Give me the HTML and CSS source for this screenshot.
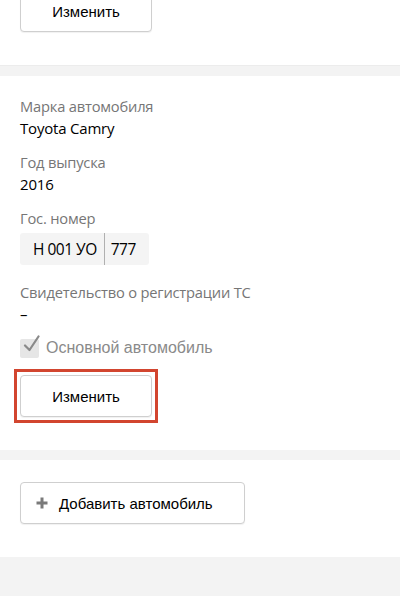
FILE: index.html
```html
<!DOCTYPE html>
<html lang="ru">
<head>
<meta charset="utf-8">
<link rel="stylesheet" href="styles.css">
</head>
<body>
<div class="page">
  <section class="section section-top">
    <button class="btn btn-edit btn-cut">Изменить</button>
  </section>
  <section class="section card">
    <div class="field">
      <div class="label">Марка автомобиля</div>
      <div class="value">Toyota Camry</div>
    </div>
    <div class="field">
      <div class="label">Год выпуска</div>
      <div class="value">2016</div>
    </div>
    <div class="field">
      <div class="label">Гос. номер</div>
      <div class="plate">
        <span class="plate-num">Н 001 УО</span>
        <span class="plate-reg">777</span>
      </div>
    </div>
    <div class="field field-cert">
      <div class="label">Свидетельство о регистрации ТС</div>
      <div class="value">–</div>
    </div>
    <label class="check">
      <span class="check-box">
        <svg width="20" height="20" viewBox="0 0 20 20"><path d="M4 10.5 L8.5 15 L17.5 1.5" fill="none" stroke="#8a8a8a" stroke-width="2.2" stroke-linecap="round" stroke-linejoin="round"/></svg>
      </span>
      <span class="check-text">Основной автомобиль</span>
    </label>
    <div class="marker">
      <button class="btn btn-edit">Изменить</button>
    </div>
  </section>
  <section class="section section-add">
    <button class="btn btn-add">
      <svg class="plus" width="12" height="12" viewBox="0 0 12 12"><path d="M6 0.5 V11.5 M0.5 6 H11.5" stroke="#7a7a7a" stroke-width="3"/></svg>
      <span>Добавить автомобиль</span>
    </button>
  </section>
</div>
</body>
</html>
```
FILE: styles.css
```css
* { box-sizing: border-box; }
html, body { margin: 0; padding: 0; }
body {
  background: #f3f3f3;
  font-family: "Liberation Sans", Arial, sans-serif;
  color: #000;
  width: 400px;
  height: 596px;
  overflow: hidden;
}
.page {
  display: flex;
  flex-direction: column;
  gap: 10px;
}
.section {
  background: #fff;
  padding: 0 20px;
}
.section-top {
  padding-bottom: 33px;
  border-bottom: 1px solid #ececec;
}
.btn {
  display: flex;
  align-items: center;
  justify-content: center;
  height: 42px;
  background: #fff;
  border: 1px solid #cfcfcf;
  border-radius: 4px;
  box-shadow: 0 1px 1px rgba(0,0,0,0.06);
  font-family: "Liberation Sans", Arial, sans-serif;
  font-size: 15px;
  color: #000;
  padding: 0;
}
.btn-edit { width: 132px; }
.btn-cut { margin-top: -10px; }
.card {
  padding-top: 19px;
  padding-bottom: 27px;
}
.field { margin-bottom: 12px; }
.label {
  font-family: "Open Sans", sans-serif;
  font-size: 14.7px;
  line-height: 22px;
  color: #767676;
  letter-spacing: -0.2px;
}
.value {
  font-family: "Open Sans", sans-serif;
  font-size: 15px;
  line-height: 22px;
  color: #000;
  letter-spacing: -0.2px;
}
.plate {
  margin-top: 4px;
  display: inline-flex;
  align-items: stretch;
  height: 32px;
  background: #f4f4f4;
  border-radius: 3px;
  font-family: "Open Sans", sans-serif;
  font-size: 15.5px;
  letter-spacing: -0.5px;
}
.plate-num {
  display: flex;
  align-items: center;
  padding: 0 7px 0 13px;
  border-right: 1px solid #b0b0b0;
}
.plate-reg {
  display: flex;
  align-items: center;
  padding: 0 13px 0 6px;
}
.field-cert { margin-top: 16px; margin-bottom: 13px; }
.check {
  display: flex;
  align-items: center;
  gap: 7px;
  height: 20px;
}
.check-box {
  width: 19px;
  height: 19px;
  background: #e6e6e6;
  border-radius: 2px;
  position: relative;
}
.check-box svg {
  position: absolute;
  left: 1px;
  top: -4px;
}
.check-text {
  font-family: "Liberation Sans", Arial, sans-serif;
  font-size: 16px;
  color: #8a8a8a;
}
.marker {
  display: inline-flex;
  margin: 11px 0 0 -6px;
  padding: 3px;
  border: 3px solid #d2452f;
}
.section-add {
  padding-top: 22px;
  padding-bottom: 33px;
}
.btn-add {
  width: 225px;
  justify-content: flex-start;
  padding-left: 15px;
  gap: 11px;
}
.plus { flex: none; }
```
